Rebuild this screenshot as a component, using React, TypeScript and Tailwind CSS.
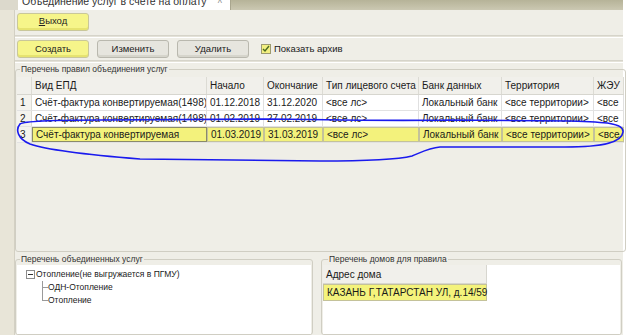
import React from "react";

const cols = [
  { title: "Вид ЕПД", w: "w-[175px]" },
  { title: "Начало", w: "w-[57px]" },
  { title: "Окончание", w: "w-[59px]" },
  { title: "Тип лицевого счета", w: "w-[96px]" },
  { title: "Банк данных", w: "w-[83px]" },
  { title: "Территория", w: "w-[92px]" },
  { title: "ЖЭУ", w: "flex-1" },
];

const rows = [
  ["Счёт-фактура конвертируемая(1498)", "01.12.2018", "31.12.2020", "<все лс>", "Локальный банк", "<все территории>", "<все"],
  ["Счёт-фактура конвертируемая(1498)", "01.02.2019", "27.02.2019", "<все лс>", "Локальный банк", "<все территории>", "<все"],
  ["Счёт-фактура конвертируемая", "01.03.2019", "31.03.2019", "<все лс>", "Локальный банк", "<все территории>", "<все"],
];

function Btn({ label, yellow, u }: { label: string; yellow?: boolean; u?: boolean }) {
  return (
    <div
      className={
        "w-[72px] h-[18px] rounded-[3px] border flex items-center justify-center text-[9.5px] text-[#222] " +
        (yellow
          ? "bg-[#f6f58a] border-[#c9c79a] shadow-[inset_0_-2px_0_#e6e370]"
          : "bg-[#e6e5de] border-[#b9b8ae] shadow-[inset_0_-2px_0_#d6d5cc]")
      }
    >
      {u ? (
        <span>
          <span className="underline">В</span>ыход
        </span>
      ) : (
        label
      )}
    </div>
  );
}

function Sep() {
  return <div className="h-[3px] border-t border-[#d6d4ca] border-b border-b-white bg-[#e4e2d8]" />;
}

export default function App() {
  return (
    <div className="relative w-[628px] h-[335px] overflow-hidden bg-white font-['Liberation_Sans',Arial,sans-serif] text-[#1a1a1a]">
      <div className="w-[623px] h-[335px] flex flex-col bg-[#efeee7]">
        {/* top tab bar */}
        <div className="h-[10px] flex shrink-0">
          <div className="w-[18px] bg-[#dcd9cc]" />
          <div className="w-[213px] bg-white border-r border-[#a9a68e] relative overflow-hidden flex">
            <div className="ml-[4px] mt-[-5px] text-[10.5px] leading-[13px] whitespace-nowrap text-[#333]">
              Объединение услуг в счете на оплату
            </div>
            <div className="ml-auto mr-[8px] mt-[-3px] text-[9px] text-[#888]">^</div>
          </div>
          <div className="flex-1 bg-gradient-to-b from-[#b6b398] to-[#cbc8b2]" />
        </div>

        <div className="flex flex-1 min-h-0">
          {/* left strip */}
          <div className="w-[15px] bg-[#e8e5d8] border-r border-[#d3d0c3] shrink-0" />

          <div className="flex-1 flex flex-col min-w-0">
            <div className="h-[22px] flex items-center pl-[2px] pt-[1px]">
              <Btn label="Выход" yellow u />
            </div>
            <div className="h-[3px]" />
            <Sep />
            <div className="h-[22px] flex items-center gap-[8px] pl-[2px]">
              <Btn label="Создать" yellow />
              <Btn label="Изменить" />
              <Btn label="Удалить" />
              <div className="flex items-center gap-[3px] ml-[4px]">
                <div className="w-[10px] h-[10px] bg-[#f2ef80] border border-[#9c9a70] flex items-center justify-center">
                  <svg width="8" height="8" viewBox="0 0 8 8">
                    <path d="M1 4 L3 6 L7 1" stroke="#4a6a20" strokeWidth="1.4" fill="none" />
                  </svg>
                </div>
                <span className="text-[9.5px]">Показать архив</span>
              </div>
            </div>
            <Sep />

            {/* rules group */}
            <fieldset className="mt-[1px] border border-[#d0cec3] rounded-[3px] h-[188px] flex flex-col">
              <legend className="ml-[4px] px-[1px] text-[8.5px] leading-[10px] text-[#333]">
                Перечень правил объединения услуг
              </legend>
              <div className="flex-1 bg-white mx-[1px] mb-[1px] mt-[3px] flex flex-col overflow-hidden">
                <div className="h-[18px] flex bg-[#f1f0eb] border-b border-[#d7d6cf] text-[10px] shrink-0">
                  <div className="w-[15px] border-r border-[#dcdbd4]" />
                  {cols.map((c) => (
                    <div key={c.title} className={c.w + " px-[3px] flex items-center border-r border-[#dcdbd4] whitespace-nowrap overflow-hidden"}>
                      {c.title}
                    </div>
                  ))}
                </div>
                {rows.map((r, i) => {
                  const sel = i === 2;
                  return (
                    <div key={i} className="h-[16px] flex text-[10px] border-b border-[#e2e2e2] shrink-0">
                      <div className="w-[15px] pl-[3px] flex items-center bg-[#f4f3ee] border-r border-[#dcdbd4]">{i + 1}</div>
                      {r.map((v, j) => (
                        <div
                          key={j}
                          className={
                            cols[j].w +
                            " px-[3px] flex items-center whitespace-nowrap overflow-hidden " +
                            (sel
                              ? "bg-[#f3f27c] border " + (j === 0 ? "border-[#8a8a6a]" : "border-[#c4c29a]")
                              : "border-r border-[#e0e0e0]")
                          }
                        >
                          {v}
                        </div>
                      ))}
                    </div>
                  );
                })}
              </div>
            </fieldset>

            {/* bottom panels */}
            <div className="flex gap-[8px] mt-[2px] flex-1 min-h-0 pr-[1px]">
              <fieldset className="w-[298px] border border-[#d0cec3] rounded-[3px] flex flex-col">
                <legend className="ml-[4px] px-[1px] text-[8.5px] leading-[10px] text-[#333]">
                  Перечень объединенных услуг
                </legend>
                <div className="flex-1 bg-white mx-[1px] mt-[1px] pl-[9px] pt-[3px] text-[8.5px] leading-[13px]">
                  <div className="flex items-center">
                    <div className="w-[9px] h-[9px] border border-[#8c8c8c] flex items-center justify-center bg-white">
                      <div className="w-[5px] h-px bg-[#333]" />
                    </div>
                    <span className="ml-[1px]">Отопление(не выгружается в ПГМУ)</span>
                  </div>
                  <div className="relative pl-[22px]">
                    <div className="absolute left-[16px] top-0 h-[19px] border-l border-[#9a9a9a]" />
                    <div className="flex items-center">
                      <div className="absolute left-[16px] w-[6px] border-t border-[#9a9a9a]" />
                      ОДН-Отопление
                    </div>
                    <div className="flex items-center relative">
                      <div className="absolute left-[-6px] w-[6px] border-t border-[#9a9a9a]" />
                      Отопление
                    </div>
                  </div>
                </div>
              </fieldset>
              <fieldset className="flex-1 border border-[#d0cec3] rounded-[3px] flex flex-col">
                <legend className="ml-[6px] px-[1px] text-[8.5px] leading-[10px] text-[#333]">
                  Перечень домов для правила
                </legend>
                <div className="flex-1 bg-white mx-[1px] mt-[1px] text-[10px]">
                  <div className="w-[164px] h-[19px] flex items-center px-[3px] bg-[#f1f0eb] border-b border-r border-[#d7d6cf]">
                    Адрес дома
                  </div>
                  <div className="w-[164px] h-[17px] flex items-center px-[3px] bg-[#f4f37c] border border-[#c4c29a] whitespace-nowrap">
                    КАЗАНЬ Г,ТАТАРСТАН УЛ, д.14/59
                  </div>
                </div>
              </fieldset>
            </div>
          </div>
        </div>
      </div>

      {/* hand-drawn annotation */}
      <svg className="absolute left-0 top-0 pointer-events-none" width="628" height="335" viewBox="0 0 628 335">
        <path
          d="M20 124 C24 121 60 120 100 120 L270 119 C330 120 390 121 450 120 L570 121 C605 122 624 123 623 132 C622 142 605 147 565 147 L440 147 C428 148 420 153 412 156 C400 159 370 161 320 161 L140 159 C90 155 50 151 30 144 C18 139 15 130 20 124"
          stroke="#1a1aee"
          strokeWidth="1.6"
          fill="none"
          strokeLinecap="round"
        />
      </svg>
    </div>
  );
}
